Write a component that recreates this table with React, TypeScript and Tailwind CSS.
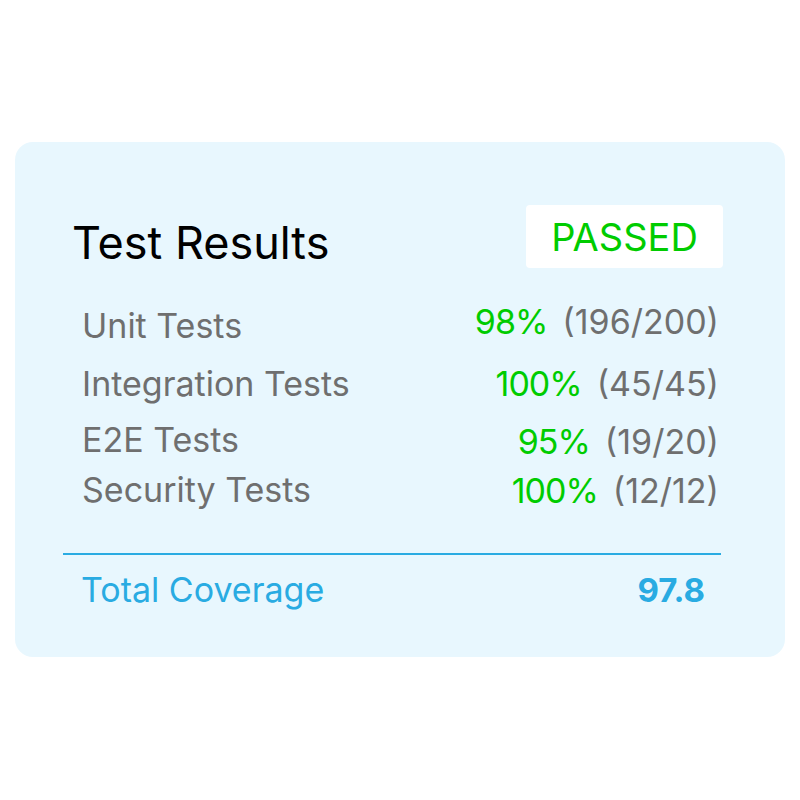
import React from "react";

const rows = [
  { label: "Unit Tests", pct: "98%", count: "(196/200)", h: "h-[58px]", shift: "-translate-y-[4px]" },
  { label: "Integration Tests", pct: "100%", count: "(45/45)", h: "h-[58px]", shift: "" },
  { label: "E2E Tests", pct: "95%", count: "(19/20)", h: "h-[54px]", shift: "translate-y-[2px]" },
  { label: "Security Tests", pct: "100%", count: "(12/12)", h: "h-[46px]", shift: "translate-y-[1px]" },
];

export default function App() {
  return (
    <div className="w-[800px] h-[800px] bg-white pt-[142px] pl-[15px]" style={{ fontFamily: "Inter, 'Noto Sans', sans-serif" }}>
      <div className="w-[770px] h-[515px] rounded-[18px] bg-[#e8f7fe] pl-[48px] pr-[62px] pt-[63px] flex flex-col">
        <div className="flex items-center justify-between h-[63px]">
          <div className="ml-[9px] mt-[12px] text-[45px] leading-none text-black">Test Results</div>
          <div className="w-[197px] h-[63px] rounded-[4px] bg-white flex items-center justify-center text-[38px] leading-none text-[#00cc00]">
            PASSED
          </div>
        </div>
        <div className="mt-[29px] pl-[19px] pr-[4px] flex flex-col">
          {rows.map((r) => (
            <div key={r.label} className={`${r.h} flex items-center justify-between`}>
              <div className="text-[34px] leading-none text-[#6f6f6f]">{r.label}</div>
              <div className={`flex items-center gap-[15px] text-[34px] leading-none ${r.shift}`}>
                <span className="text-[#00cc00] tracking-[-1px]">{r.pct}</span>
                <span className="text-[#6f6f6f]">{r.count}</span>
              </div>
            </div>
          ))}
        </div>
        <div className="mt-[40px] h-[2px] w-[658px] bg-[#29abe2]" />
        <div className="mt-[10px] h-[50px] pl-[18px] pr-[18px] flex items-center justify-between">
          <div className="text-[34px] leading-none text-[#29abe2]">Total Coverage</div>
          <div className="text-[33px] leading-none font-bold text-[#29abe2]">97.8</div>
        </div>
      </div>
    </div>
  );
}
